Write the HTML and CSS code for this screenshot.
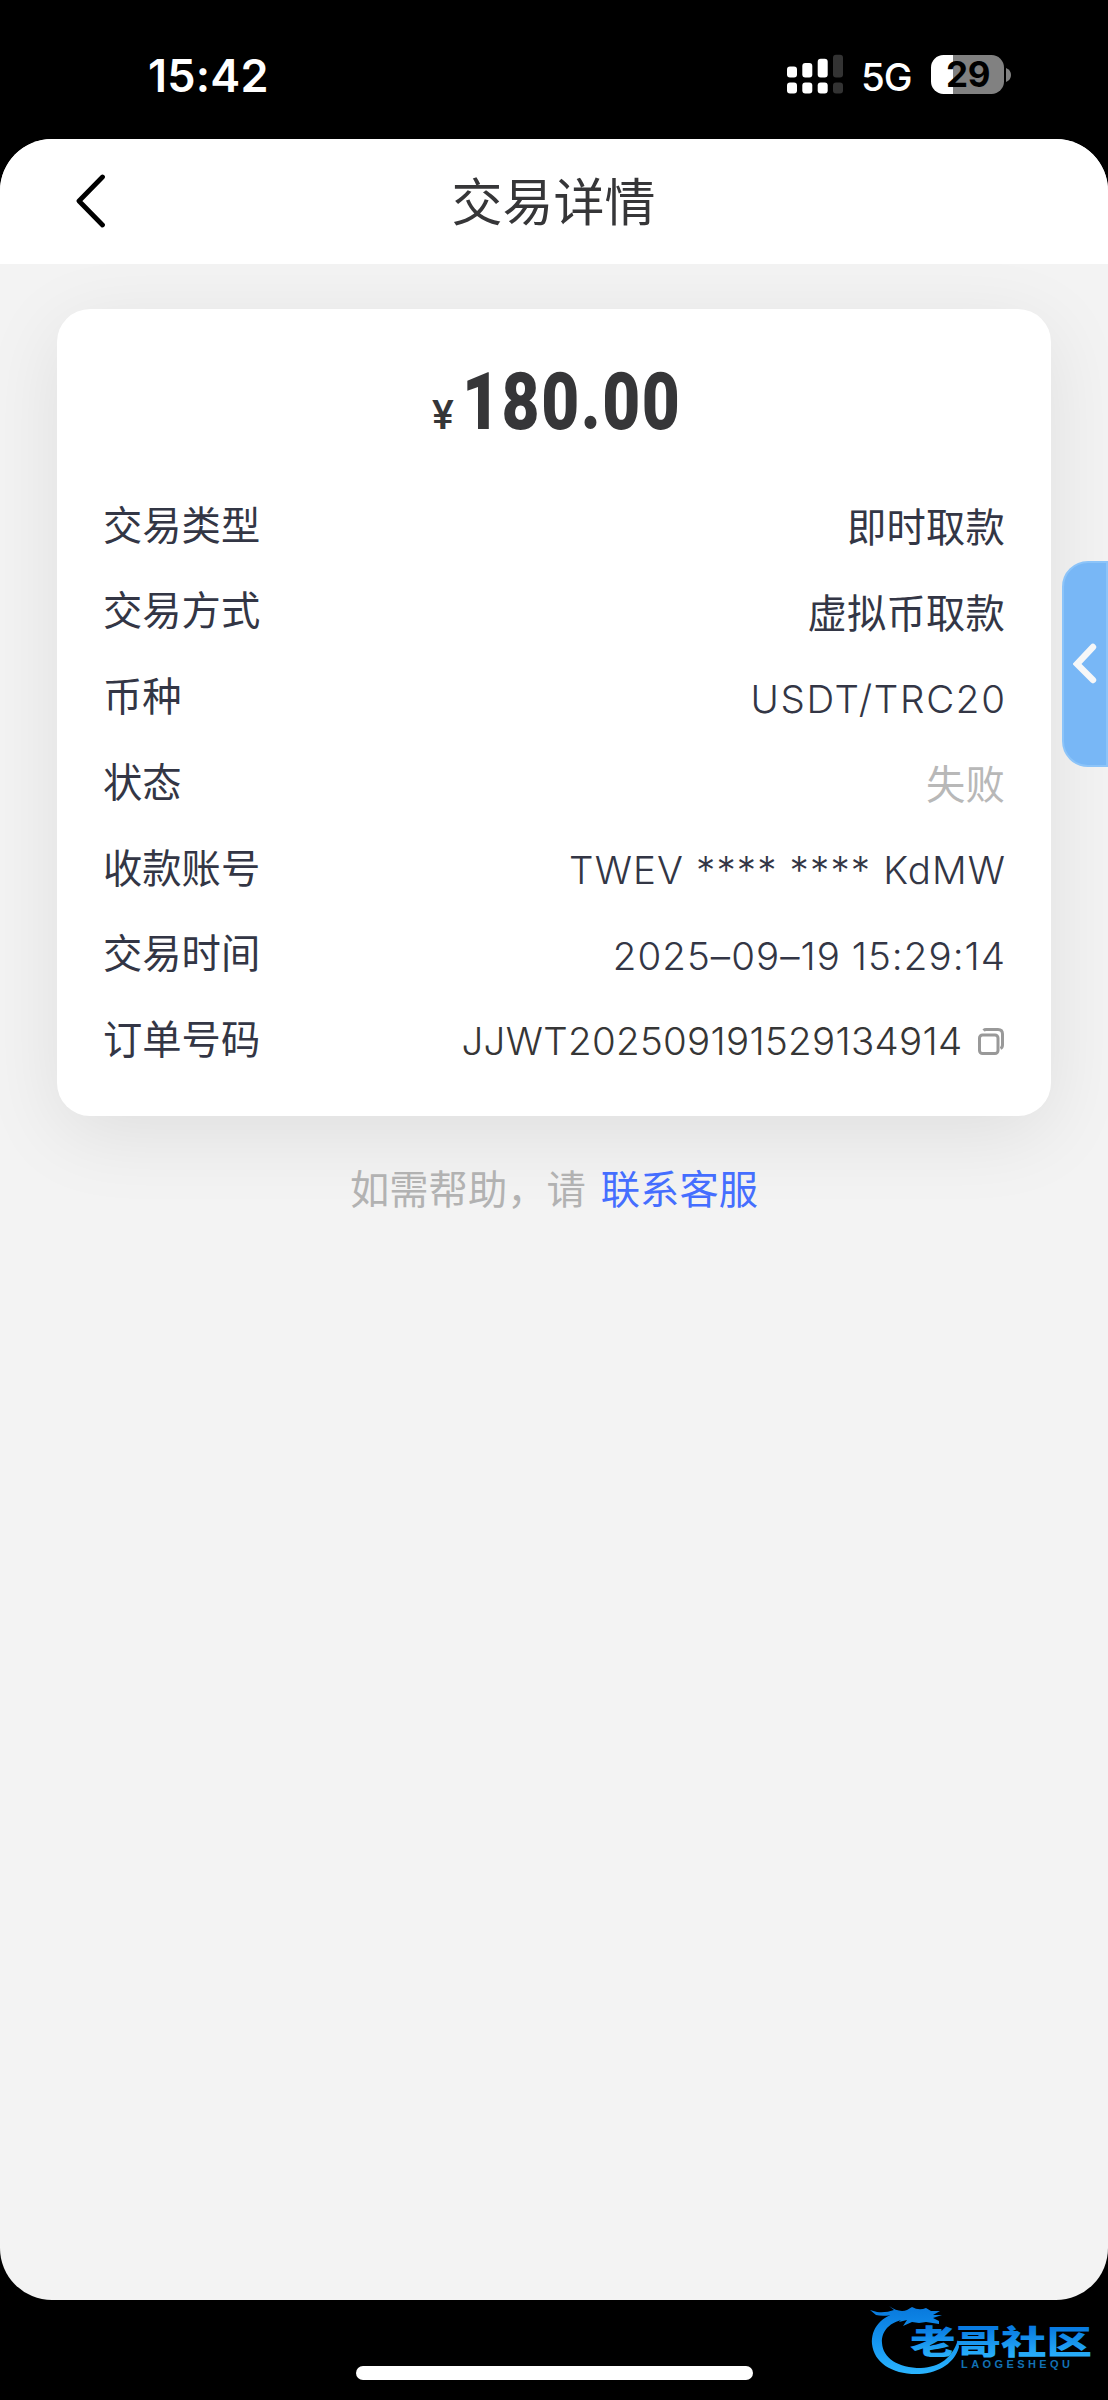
FILE: index.html
```html
<!DOCTYPE html>
<html lang="zh-CN">
<head>
<meta charset="utf-8">
<title>交易详情</title>
<link rel="stylesheet" href="styles.css">
</head>
<body>
<div class="phone">
  <div class="status-bar">
    <span class="clock">15:42</span>
    <div class="status-icons">
      <svg class="signal" width="57" height="40" viewBox="0 0 57 40" fill="#fff">
        <rect x="0" y="12.5" width="10" height="11" rx="3"/>
        <rect x="15.3" y="9" width="10" height="14.500" rx="3"/>
        <rect x="30.700" y="4.800" width="10" height="18.700" rx="3"/>
        <rect x="46" y="0.700" width="10" height="22.800" rx="3" fill="#333"/>
        <rect x="0" y="28.500" width="10" height="11" rx="3"/>
        <rect x="15.300" y="28.500" width="10" height="11" rx="3"/>
        <rect x="30.700" y="28.500" width="10" height="11" rx="3"/>
        <rect x="46" y="28.500" width="10" height="11" rx="3" fill="#333"/>
      </svg>
      <span class="network">5G</span>
      <div class="battery"><span class="battery-level">29</span></div>
      <svg class="battery-tip" width="6" height="14" viewBox="0 0 6 14"><path d="M0 0Q5 2 5 7T0 14Z" fill="#818181"/></svg>
    </div>
  </div>

  <main class="screen">
    <header class="nav">
      <svg class="back" width="30" height="54" viewBox="0 0 30 54"><path d="M26.500 3 3 27 26.500 51" fill="none" stroke="#000" stroke-width="4.800" stroke-linecap="round" stroke-linejoin="round"/></svg>
      <h1 class="title">交易详情</h1>
    </header>

    <section class="card">
      <div class="amount"><span class="currency">¥</span><span class="number">180.00</span></div>
      <dl class="rows">
        <div class="row"><dt>交易类型</dt><dd>即时取款</dd></div>
        <div class="row"><dt>交易方式</dt><dd>虚拟币取款</dd></div>
        <div class="row"><dt>币种</dt><dd class="latin coin">USDT/TRC20</dd></div>
        <div class="row"><dt>状态</dt><dd class="failed">失败</dd></div>
        <div class="row"><dt>收款账号</dt><dd class="latin account">TWEV **** **** KdMW</dd></div>
        <div class="row"><dt>交易时间</dt><dd class="latin date">2025–09–19 15:29:14</dd></div>
        <div class="row order"><dt>订单号码</dt><dd class="latin"><span>JJWT202509191529134914</span>
          <svg class="copy" width="26" height="27" viewBox="0 0 26 27" fill="none" stroke="#999" stroke-width="3"><path d="M5.500 2.500Q6.500 1.500 8 1.500H20Q24.500 1.500 24.500 6V17Q24.500 19.500 22.500 20.500"/><rect x="1.500" y="7" width="18.500" height="18.500" rx="3"/></svg></dd></div>
      </dl>
    </section>

    <p class="help">如需帮助，请<a class="link">联系客服</a></p>

    <div class="side-tab"><svg width="24" height="42" viewBox="0 0 24 42"><path d="M20 4 4 21 20 37" fill="none" stroke="#f6f7f8" stroke-width="6.400" stroke-linecap="round"/></svg></div>
  </main>

  <footer class="home"><span class="home-indicator"></span></footer>

  <svg class="brand" width="230" height="80" viewBox="0 0 230 80">
    <defs><linearGradient id="blue" gradientUnits="userSpaceOnUse" x1="0" y1="5" x2="0" y2="75"><stop offset="0" stop-color="#0878dc"/><stop offset=".5" stop-color="#1494f0"/><stop offset="1" stop-color="#2cb6ff"/></linearGradient>
    <linearGradient id="type" gradientUnits="userSpaceOnUse" x1="0" y1="27" x2="0" y2="57"><stop offset="0" stop-color="#087be2"/><stop offset="1" stop-color="#2bb2fb"/></linearGradient></defs>
    <g fill="url(#blue)">
      <path d="M36 10C12 14 3 28 4 43C6 62 25 74 51 73C72 72 87 61 91 46L90 39C84 57 72 66 53 67C30 67 15 57 14 42C13 29 24 18 43 18Z"/>
      <path d="M2 9 9 11Q18 12 26 9L21 5Q31 12 39 9L44 6Q51 10 58 7L63 10 72 10 65 14 74 14 65 17 71 20 71 23 58 21 51 22 44 21 35 25 39 19 31 21 36 15 25 19 31 13Q15 16 8 14Z"/>
    </g>
    <g class="brand-name" fill="url(#type)"><text x="42" y="53" textLength="182" lengthAdjust="spacingAndGlyphs">老哥社区</text></g>
    <text class="brand-latin" x="93" y="66.500" textLength="109" lengthAdjust="spacing">LAOGESHEQU</text>
  </svg>
</div>
</body>
</html>
```
FILE: styles.css
```css
* { box-sizing: border-box; margin: 0; padding: 0; }

body {
  width: 1108px;
  background: #000;
  font-family: "Noto Sans CJK SC", sans-serif;
}

.phone {
  position: relative;
  height: 2400px;
  display: flex;
  flex-direction: column;
  overflow: hidden;
}

.status-bar {
  flex: none;
  height: 139px;
  display: flex;
  justify-content: space-between;
  padding: 54px 96px 0 148px;
  color: #fff;
  font-family: Inter, sans-serif;
}
.clock { font-size: 45px; font-weight: 600; line-height: 44px; letter-spacing: 0.2px; }
.status-icons { display: flex; align-items: flex-start; }
.network { margin: 1px 19.500px 0 17px; font-size: 38.500px; line-height: 44px; font-weight: 500; letter-spacing: -1px; }
.battery {
  width: 73px;
  height: 38.500px;
  margin-top: 1px;
  border-radius: 12.500px;
  background: linear-gradient(90deg, #fff 21.500px, #818181 21.500px);
  color: #000;
  text-align: center;
}
.battery-level { display: block; padding-left: 1px; font-size: 35px; line-height: 38.500px; font-weight: 700; letter-spacing: -0.5px; }
.battery-tip { margin: 14px 0 0 2px; }

.screen {
  flex: none;
  position: relative;
  height: 2160.500px;
  border-radius: 52px;
  overflow: hidden;
  background: #f3f3f3;
}

.nav {
  position: relative;
  z-index: 1;
  height: 125px;
  display: grid;
  grid-template-columns: 76px 1fr 76px;
  align-items: center;
  background: #fff;
}
.back { margin: -1px 0 0 76px; }
.title { padding: 0 1px 5px 0; text-align: center; font-size: 51px; line-height: 70px; font-weight: 400; color: #363638; }

.card {
  height: 807px;
  margin: 45px 57px 0;
  padding: 45.500px 46px 0;
  border-radius: 33px;
  background: #fff;
  box-shadow: 0 18px 80px rgba(0, 0, 0, 0.085);
}
.amount {
  display: flex;
  justify-content: center;
  align-items: baseline;
  height: 125px;
  color: #363638;
  font-family: Roboto, sans-serif;
}
.currency { font-size: 41px; font-weight: 500; margin-right: 8px; }
.number {
  width: 214px;
  font-size: 80px;
  line-height: 94px;
  font-weight: 900;
  letter-spacing: 1.900px;
  transform: scaleX(0.82);
  transform-origin: left;
}

.row {
  display: flex;
  justify-content: space-between;
  height: 85.800px;
  font-size: 39.300px;
  line-height: 86px;
  color: #333645;
}
.row dd { padding-top: 2.500px; letter-spacing: 0.2px; }
.row .latin { padding-top: 4.500px; font-family: Inter, sans-serif; font-size: 38.500px; font-weight: 300; }
.row .coin { letter-spacing: 1.700px; margin-right: -1.700px; }
.row .account { letter-spacing: 1.130px; margin-right: -1.130px; }
.row .date { letter-spacing: 1.050px; word-spacing: -1px; margin-right: -1.050px; }
.row .failed { color: #b8b8b8; }
.order .latin { display: flex; align-items: center; gap: 15px; height: 86px; padding: 8px 1.500px 0 0; color: #363636; letter-spacing: 0.300px; }

.help { margin-top: 41.500px; text-align: center; font-size: 39.300px; line-height: 58px; color: #b2b2b2; }
.link { margin-left: 15px; color: #456eff; }

.side-tab {
  position: absolute;
  top: 422px;
  right: 0;
  width: 46.500px;
  height: 206px;
  display: grid;
  place-items: center;
  border: 2.500px solid #8cc4f9;
  border-radius: 26px 0 0 26px;
  background: #78b7f6;
}

.home { flex: 1; display: flex; justify-content: center; padding-top: 66.500px; }
.home-indicator { width: 397px; height: 13.500px; border-radius: 7px; background: #fff; }

.brand { position: absolute; left: 868px; top: 2301px; }
.brand-name { font-size: 33px; font-weight: 900; }
.brand-latin { font: bold 11px "Liberation Sans", sans-serif; fill: #1271b4; }
```
